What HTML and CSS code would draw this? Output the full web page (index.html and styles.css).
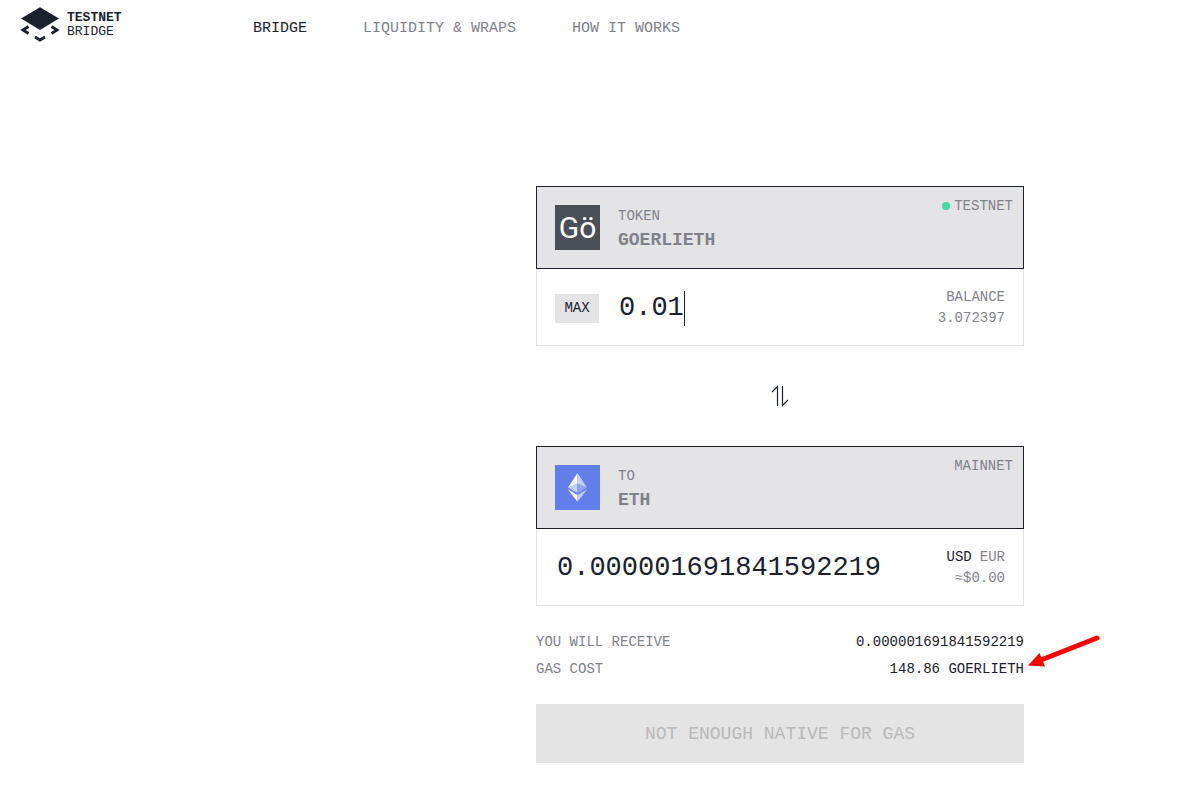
FILE: index.html
```html
<!DOCTYPE html>
<html lang="en">
<head>
<meta charset="utf-8">
<title>Testnet Bridge</title>
<link rel="stylesheet" href="styles.css">
</head>
<body>
<header class="header">
  <a class="logo" href="#">
    <svg class="logo-mark" viewBox="0 0 40 36" width="40" height="36" aria-hidden="true">
      <path d="M20 .2 39 11.500 20 23 1 11.500Z" fill="#1b212d"/>
      <path d="M8.500 19.500 3 23 8.500 26.500M31.500 19.500 37 23 31.500 26.500M15 30 20 33.200 25 30" fill="none" stroke="#1b212d" stroke-width="2.800"/>
    </svg>
    <span class="logo-text"><strong>TESTNET</strong><span>BRIDGE</span></span>
  </a>
  <nav class="nav">
    <a class="nav-link active" href="#">BRIDGE</a>
    <a class="nav-link" href="#">LIQUIDITY &amp; WRAPS</a>
    <a class="nav-link" href="#">HOW IT WORKS</a>
  </nav>
</header>
<main class="page">
  <form class="bridge">
    <section class="card">
      <button class="token" type="button">
        <span class="token-icon goerli">Gö</span>
        <span class="token-name"><span>TOKEN</span><strong>GOERLIETH</strong></span>
        <span class="network"><span class="dot"></span>TESTNET</span>
      </button>
      <div class="amount">
        <button class="max" type="button">MAX</button>
        <div class="entry">
          <input class="value short" type="text" value="0.01" aria-label="Amount to send">
          <span class="caret"></span>
        </div>
        <div class="side"><span>BALANCE</span><span>3.072397</span></div>
      </div>
    </section>
    <button class="swap" type="button" aria-label="Swap direction">
      <svg viewBox="0 0 18 22" width="18" height="22" aria-hidden="true">
        <path d="M1 7 6.500 1.500V21M17 15 11.500 20.500V1" fill="none" stroke="#1b212d" stroke-width="1.200"/>
      </svg>
    </button>
    <section class="card">
      <button class="token" type="button">
        <svg class="token-icon eth" viewBox="0 0 45 45" aria-hidden="true">
          <path d="M22.500 8v10.500L13 22.700Z" fill="#fff"/>
          <path d="M22.500 8v10.500L32 22.700Z" fill="#c4cff8"/>
          <path d="M22.500 18.500v9.500L13 22.700Z" fill="#c4cff8"/>
          <path d="M22.500 18.500v9.500L32 22.700Z" fill="#8fa3f3"/>
          <path d="M13 24.500 22.500 30v6.700Z" fill="#fff"/>
          <path d="M32 24.500 22.500 30v6.700Z" fill="#c4cff8"/>
        </svg>
        <span class="token-name"><span>TO</span><strong>ETH</strong></span>
        <span class="network">MAINNET</span>
      </button>
      <div class="amount">
        <input class="value long" type="text" value="0.000001691841592219" readonly aria-label="Amount to receive">
        <div class="side">
          <div class="currencies">
            <button class="currency active" type="button">USD</button>
            <button class="currency" type="button">EUR</button>
          </div>
          <span>≈$0.00</span>
        </div>
      </div>
    </section>
    <dl class="summary">
      <div class="row"><dt>YOU WILL RECEIVE</dt><dd>0.000001691841592219</dd></div>
      <div class="row">
        <dt>GAS COST</dt><dd>148.86 GOERLIETH</dd>
        <svg class="pointer" viewBox="0 0 76 38" width="76" height="38" aria-hidden="true">
          <path d="M73 5 17 27" stroke="#f00" stroke-width="5" stroke-linecap="round"/>
          <path d="M4 32.500 15.500 20 21 33.500Z" fill="#f00"/>
        </svg>
      </div>
    </dl>
    <button class="submit" type="button" disabled>NOT ENOUGH NATIVE FOR GAS</button>
  </form>
</main>
</body>
</html>
```
FILE: styles.css
```css
* {
  box-sizing: border-box;
}

body {
  margin: 0;
  background: #fff;
  color: #1b212d;
  font: 14px/20px "Liberation Mono", monospace;
}

button,
input {
  margin: 0;
  padding: 0;
  border: 0;
  background: none;
  color: inherit;
  font: inherit;
}

a {
  color: inherit;
  text-decoration: none;
}

.header {
  display: flex;
  align-items: center;
  padding: 0 20px;
  height: 58px;
}

.logo {
  display: flex;
  gap: 7px;
  width: 233px;
  padding-bottom: 8px;
}

.logo-text {
  display: flex;
  flex-direction: column;
  justify-content: center;
  font-size: 13px;
  line-height: 14px;
}

.nav {
  display: flex;
  gap: 56px;
  font-size: 15px;
}

.nav-link {
  color: #7f828b;
}

.nav-link.active {
  color: #1b212d;
}

.page {
  display: grid;
  grid-template-columns: 536fr minmax(440px, 488fr) 176fr;
  padding-top: 128px;
}

.bridge {
  grid-column: 2;
  display: flex;
  flex-direction: column;
}

.token {
  display: flex;
  align-items: center;
  gap: 18px;
  width: 100%;
  height: 83px;
  padding: 0 10px 0 18px;
  border: 1px solid #1b212d;
  background: #e4e4e6;
  color: #7f828b;
  text-align: left;
}

.token-icon {
  flex: none;
  width: 45px;
  height: 45px;
}

.goerli {
  background: #4a4f55;
  color: #fff;
  font: 30px/45px Roboto, sans-serif;
  text-align: center;
}

.eth {
  background: #627eea;
}

.token-name {
  display: flex;
  flex: 1;
  flex-direction: column;
  line-height: 24px;
}

.token-name strong {
  font-size: 18px;
}

.network {
  display: flex;
  align-items: center;
  align-self: flex-start;
  gap: 4px;
  padding-top: 9px;
}

.dot {
  width: 8px;
  height: 8px;
  border-radius: 50%;
  background: #3fdba5;
}

.amount {
  display: flex;
  align-items: center;
  gap: 18px;
  height: 77px;
  padding: 2px 18px 0;
  border: 1px solid #e4e4e6;
  border-top: 0;
}

.max {
  width: 44px;
  height: 29px;
  background: #e4e4e6;
}

.entry {
  display: flex;
  flex: 1;
  align-items: center;
}

.value {
  box-sizing: content-box;
  min-width: 0;
  height: 36px;
  padding-left: 2px;
  font-size: 27px;
  outline: 0;
}

.short {
  width: 4ch;
}

.long {
  flex: 1;
}

.caret {
  width: 1px;
  height: 35px;
  background: #1b212d;
}

.side {
  display: flex;
  flex-direction: column;
  align-items: flex-end;
  color: #7f828b;
  line-height: 21px;
}

.currencies {
  display: flex;
  gap: 8px;
}

.currency.active {
  color: #1b212d;
}

.swap {
  display: flex;
  align-items: center;
  justify-content: center;
  height: 100px;
}

.summary {
  margin: 23px 0 21px;
  line-height: 27px;
}

.row {
  position: relative;
  display: flex;
  justify-content: space-between;
}

.row dt {
  color: #7f828b;
}

.row dd {
  margin: 0;
}

.pointer {
  position: absolute;
  bottom: 12px;
  left: 100%;
}

.submit {
  height: 59px;
  background: #e4e4e4;
  color: #b9b9b9;
  font-size: 18px;
}
```
